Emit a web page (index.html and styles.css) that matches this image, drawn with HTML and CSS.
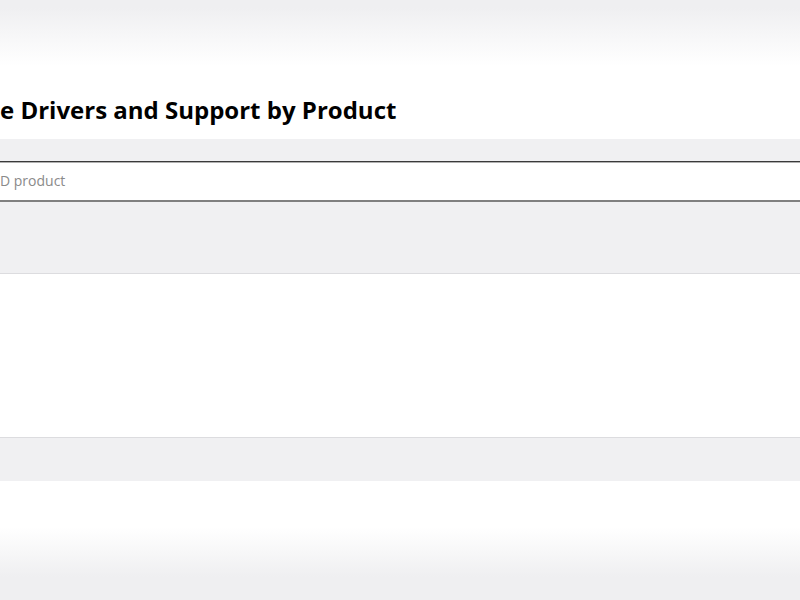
FILE: index.html
```html
<!DOCTYPE html>
<html lang="en">
<head>
<meta charset="utf-8">
<title>Drivers and Support by Product</title>
<link rel="stylesheet" href="styles.css">
</head>
<body>
<div class="top-fade"></div>
<section class="title-area">
  <h1 class="title">e Drivers and Support by Product</h1>
</section>
<section class="search-band">
  <div class="search-box">
    <input class="search-input" type="text" placeholder="D product">
  </div>
</section>
<section class="results"></section>
<section class="footer-band"></section>
<div class="bottom-fade"></div>
</body>
</html>
```
FILE: styles.css
```css
html, body {
  margin: 0;
  padding: 0;
  background: #ffffff;
  font-family: "Open Sans", "Liberation Sans", sans-serif;
  overflow: hidden;
}

.top-fade {
  height: 70px;
  background: linear-gradient(#efeff1 0px, #efeff1 8px, #ffffff 66px);
}

.title-area {
  height: 69px;
  padding-top: 23px;
  box-sizing: border-box;
  background: #ffffff;
}

.title {
  margin: 0;
  font-size: 24px;
  line-height: 33px;
  font-weight: 700;
  color: #000000;
  white-space: nowrap;
}

.search-band {
  background: #f0f0f2;
  padding-top: 22px;
  height: 135px;
  box-sizing: border-box;
  border-bottom: 1px solid #dcdcdf;
}

.search-box {
  height: 41px;
  box-sizing: border-box;
  background: #ffffff;
  border-top: 1px solid #3a3a3a;
  border-bottom: 2px solid #808080;
  box-shadow: inset 0 1px 0 #b0b0b0;
  display: flex;
  align-items: center;
}

.search-input {
  border: 0;
  outline: 0;
  padding: 0;
  margin: 0;
  width: 100%;
  height: 20px;
  font-family: inherit;
  font-size: 14px;
  line-height: 20px;
  color: #333;
  background: transparent;
}

.search-input::placeholder {
  color: #8a8a8a;
}

.results {
  height: 164px;
  box-sizing: border-box;
  background: #ffffff;
  border-bottom: 1px solid #dcdcdf;
}

.footer-band {
  height: 43px;
  background: #f0f0f2;
}

.bottom-fade {
  height: 120px;
  background: linear-gradient(#ffffff 46px, #efeff1 96px);
}
```
